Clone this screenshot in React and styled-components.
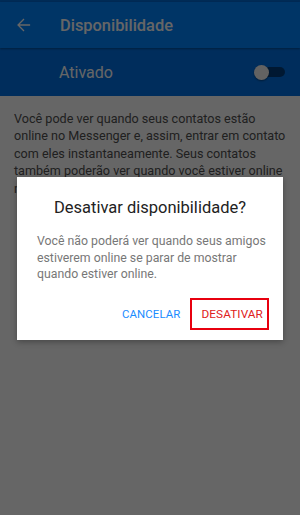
import React from 'react'
import styled, { createGlobalStyle } from 'styled-components'

const GlobalStyle = createGlobalStyle`
  html, body { margin: 0; padding: 0; }
  body {
    font-family: Roboto, "Noto Sans", "Liberation Sans", sans-serif;
    background: #ffffff;
    width: 300px;
    height: 515px;
    overflow: hidden;
  }
`

const Page = styled.div`
  position: relative;
  width: 300px;
  height: 515px;
  background: #ffffff;
  overflow: hidden;
`

const StatusStrip = styled.div`
  height: 2px;
  background: #006bd8;
`

const AppBar = styled.div`
  display: flex;
  align-items: center;
  height: 46px;
  background: #0084ff;
  color: #ffffff;
  box-shadow: 0 1px 2px rgba(0, 0, 0, 0.35);
  position: relative;
  z-index: 1;
`

const BackButton = styled.div`
  width: 60px;
  display: flex;
  align-items: center;
  padding-left: 17px;
  box-sizing: border-box;
`

const Title = styled.div`
  font-size: 16.4px;
  font-weight: 500;
`

const SwitchRow = styled.div`
  display: flex;
  align-items: center;
  justify-content: space-between;
  height: 48px;
  padding: 0 15px 0 59px;
  background: #0072e6;
  color: #ffffff;
`

const RowLabel = styled.div`
  font-size: 16px;
`

const Switch = styled.div`
  position: relative;
  width: 31px;
  height: 16px;
  display: flex;
  align-items: center;
  justify-content: flex-end;
`

const Track = styled.div`
  width: 27px;
  height: 10px;
  border-radius: 5px;
  background: rgba(0, 0, 0, 0.45);
`

const Knob = styled.div`
  position: absolute;
  left: 0;
  top: 0.5px;
  width: 15px;
  height: 15px;
  border-radius: 50%;
  background: #f6f6f6;
  box-shadow: 0 1px 2px rgba(0, 0, 0, 0.4);
`

const Description = styled.p`
  margin: 0;
  padding: 14px 14px 0 14px;
  font-size: 12.6px;
  line-height: 17.4px;
  color: #505050;
`

const Scrim = styled.div`
  position: absolute;
  inset: 0;
  background: rgba(0, 0, 0, 0.6);
  z-index: 2;
`

const Dialog = styled.div`
  position: absolute;
  left: 17px;
  top: 177px;
  width: 266px;
  box-sizing: border-box;
  background: #ffffff;
  padding: 21px 14px 10px 20px;
  z-index: 3;
  box-shadow: 0 2px 6px rgba(0, 0, 0, 0.3);
`

const DialogTitle = styled.div`
  text-align: center;
  font-size: 16.5px;
  line-height: 20px;
  color: #222222;
  margin: 0 -8px 15px -14px;
`

const DialogText = styled.div`
  font-size: 12.3px;
  line-height: 16.5px;
  color: #777777;
`

const Actions = styled.div`
  display: flex;
  justify-content: flex-end;
  align-items: center;
  gap: 10px;
  margin-top: 15px;
`

const ActionButton = styled.div`
  font-size: ${p => (p.$outlined ? '11.8px' : '11.4px')};
  letter-spacing: 0.1px;
  color: ${p => p.$color};
  height: 32px;
  box-sizing: border-box;
  display: flex;
  align-items: center;
  padding: ${p => (p.$outlined ? '0 4px 0 9px' : '0')};
  border: ${p => (p.$outlined ? '2px solid #e8000f' : 'none')};
`

export default function App() {
  return (
    <Page>
      <GlobalStyle />
      <StatusStrip />
      <AppBar>
        <BackButton>
          <svg width="14" height="14" viewBox="0 0 16 16" fill="none" stroke="#ffffff" strokeWidth="1.5">
            <path d="M15 8H1.8M8 1.2L1.2 8l6.8 6.8" />
          </svg>
        </BackButton>
        <Title>Disponibilidade</Title>
      </AppBar>
      <SwitchRow>
        <RowLabel>Ativado</RowLabel>
        <Switch>
          <Track />
          <Knob />
        </Switch>
      </SwitchRow>
      <Description>
        Você pode ver quando seus contatos estão online no Messenger e, assim, entrar em contato com eles
        instantaneamente. Seus contatos também poderão ver quando você estiver online no Messenger.
      </Description>
      <Scrim />
      <Dialog>
        <DialogTitle>Desativar disponibilidade?</DialogTitle>
        <DialogText>
          Você não poderá ver quando seus amigos estiverem online se parar de mostrar quando estiver online.
        </DialogText>
        <Actions>
          <ActionButton $color="#1a8cff">CANCELAR</ActionButton>
          <ActionButton $color="#e02020" $outlined>DESATIVAR</ActionButton>
        </Actions>
      </Dialog>
    </Page>
  )
}
